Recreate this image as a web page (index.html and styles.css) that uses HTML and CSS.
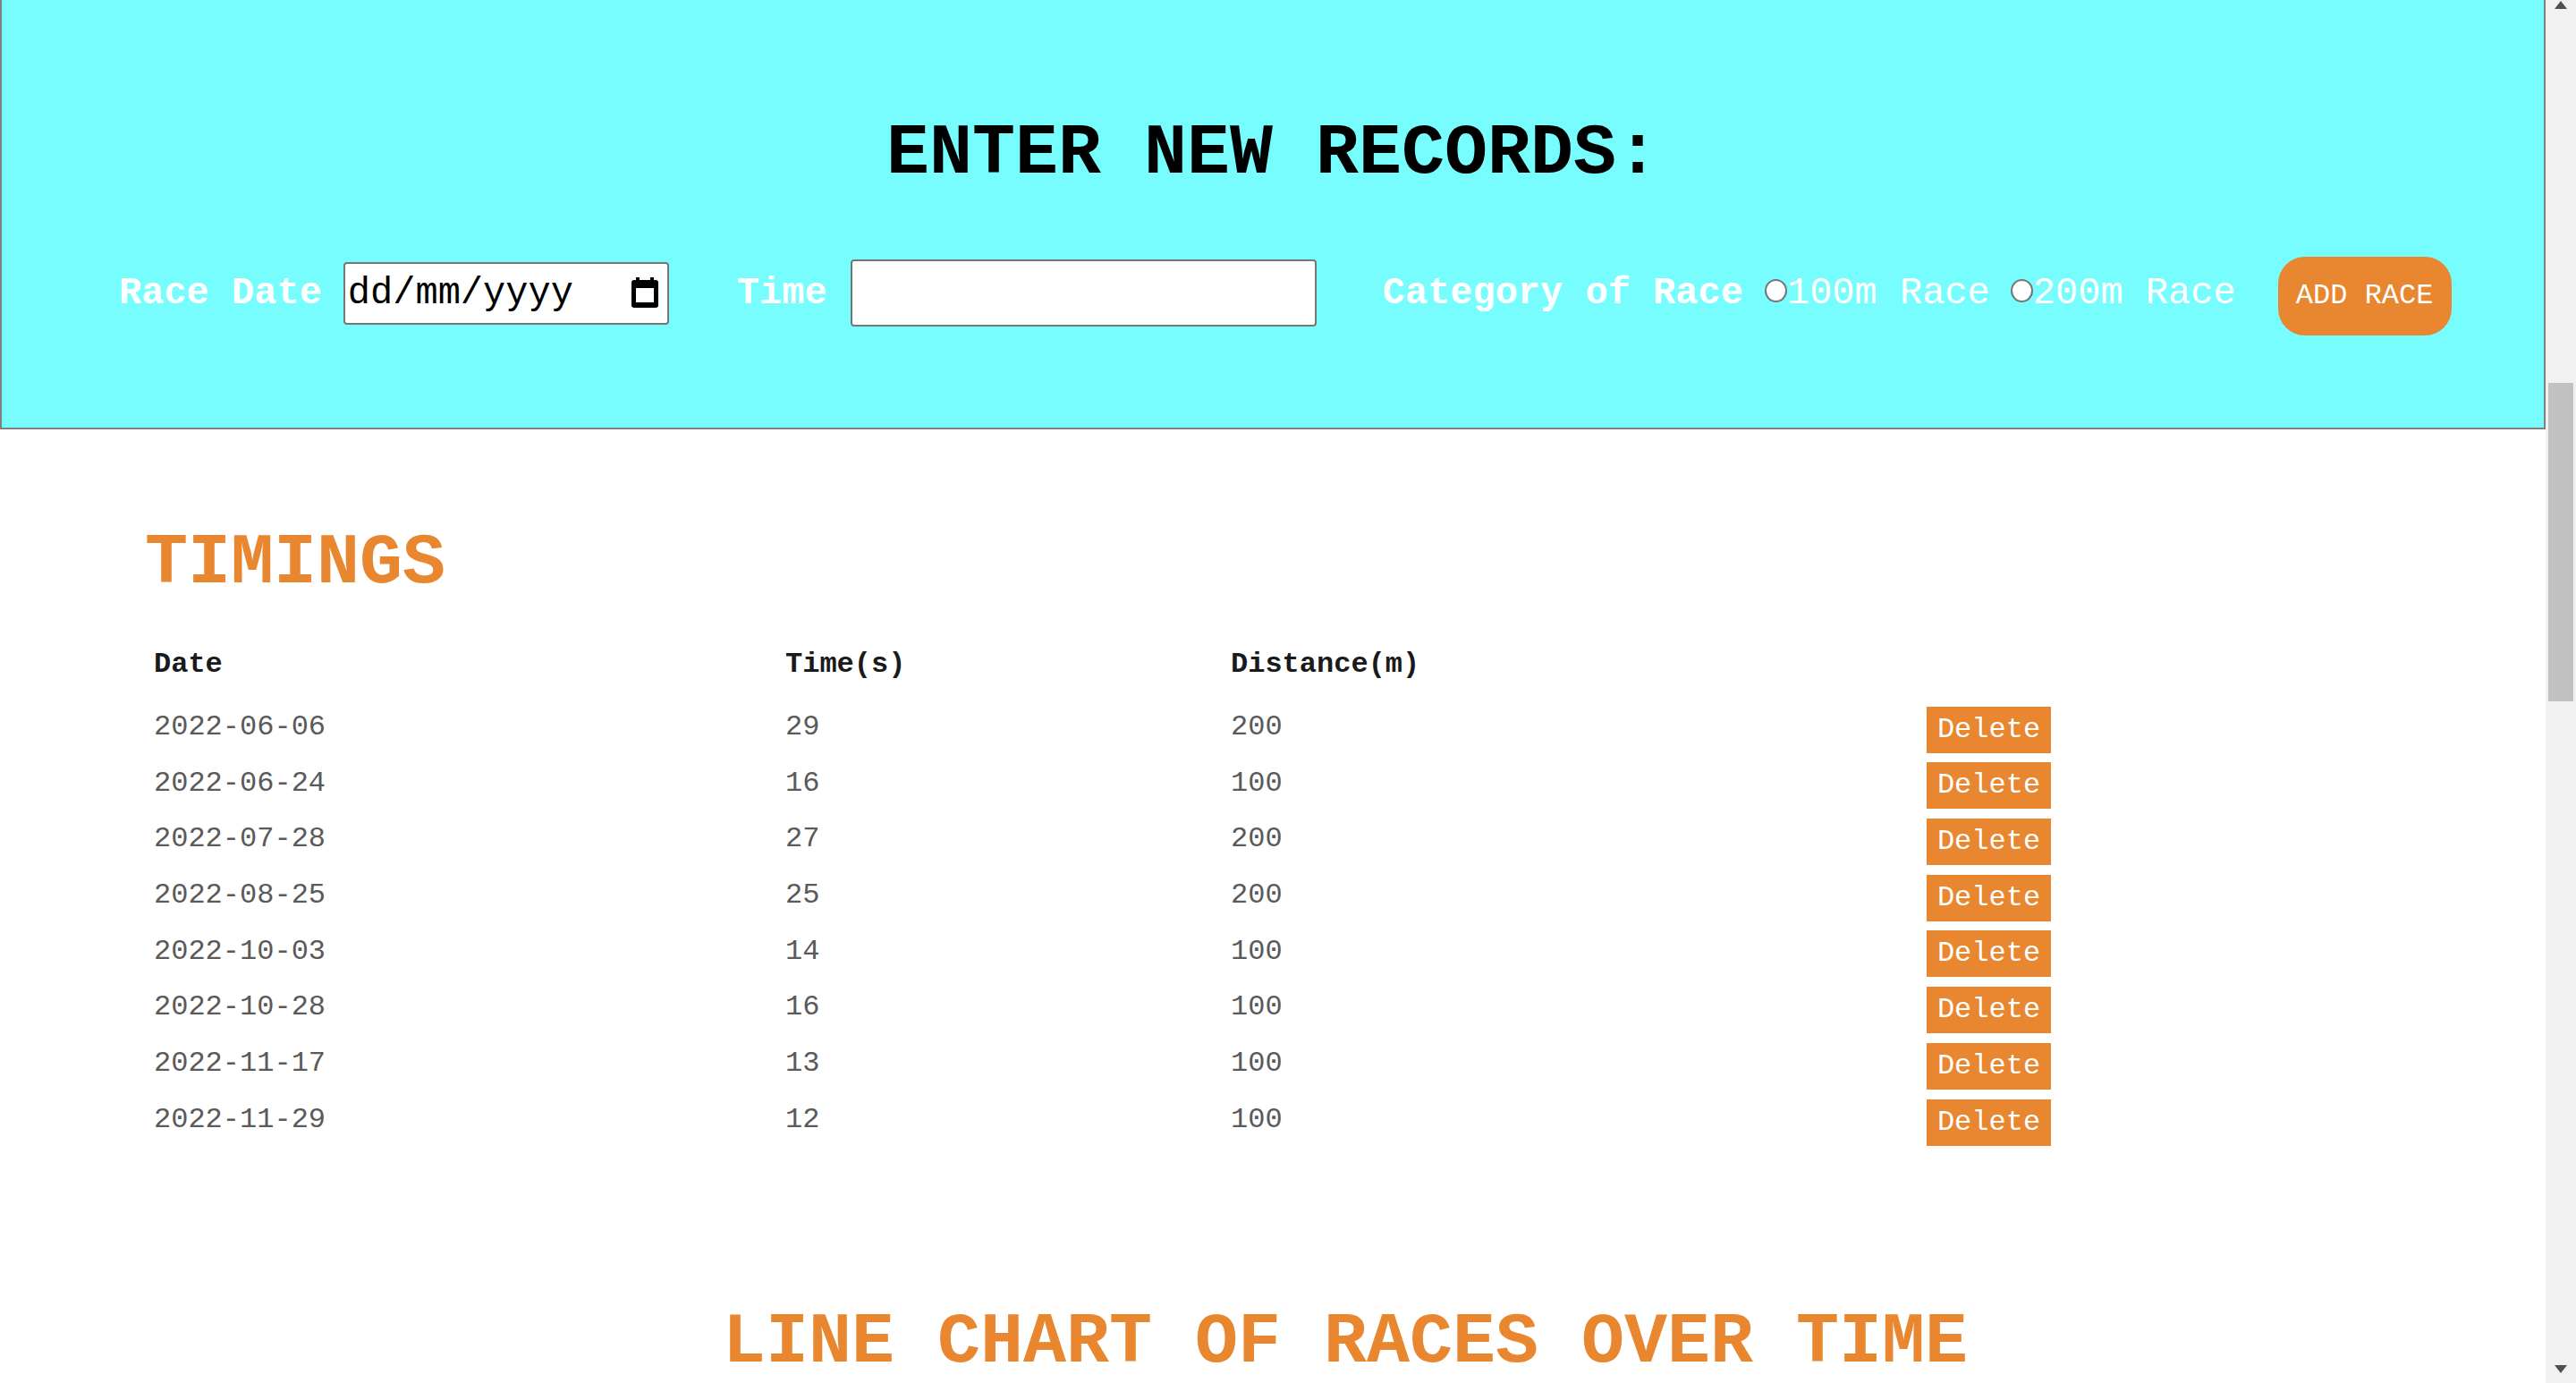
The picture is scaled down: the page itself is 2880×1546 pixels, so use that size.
FILE: index.html
```html
<!DOCTYPE html>
<html lang="en">
<head>
<meta charset="utf-8">
<title>Race Records</title>
<link rel="stylesheet" href="styles.css">
</head>
<body>
<div class="page">
  <main class="content">
    <header class="entry">
      <h1 class="entry-title">ENTER NEW RECORDS:</h1>
      <form class="entry-form">
        <label class="field-label lbl-date">Race Date</label>
        <div class="date-input">
          <span class="date-text">dd/mm/yyyy</span>
          <svg class="cal-icon" viewBox="0 0 32 35" width="32" height="35" aria-hidden="true">
            <rect x="6" y="0" width="4" height="6" fill="#000"/>
            <rect x="22" y="0" width="4" height="6" fill="#000"/>
            <rect x="1" y="3" width="30" height="31" rx="3" fill="#000"/>
            <rect x="6" y="12" width="20" height="16" fill="#fff"/>
          </svg>
        </div>
        <label class="field-label lbl-time">Time</label>
        <input class="time-input" type="text" aria-label="Time">
        <label class="field-label lbl-cat">Category of Race</label>
        <input class="radio" type="radio" name="cat" aria-label="100m Race">
        <span class="radio-text rt-first">100m Race</span>
        <input class="radio" type="radio" name="cat" aria-label="200m Race">
        <span class="radio-text rt-last">200m Race</span>
        <button class="add-btn" type="button">ADD RACE</button>
      </form>
    </header>

    <section class="timings">
      <h2 class="section-title">TIMINGS</h2>
      <div class="table">
        <div class="row row-head">
          <div class="cell th">Date</div>
          <div class="cell th">Time(s)</div>
          <div class="cell th">Distance(m)</div>
          <div class="cell th"></div>
        </div>
        <div class="row"><div class="cell td">2022-06-06</div><div class="cell td">29</div><div class="cell td">200</div><div class="cell"><button class="del-btn" type="button">Delete</button></div></div>
        <div class="row"><div class="cell td">2022-06-24</div><div class="cell td">16</div><div class="cell td">100</div><div class="cell"><button class="del-btn" type="button">Delete</button></div></div>
        <div class="row"><div class="cell td">2022-07-28</div><div class="cell td">27</div><div class="cell td">200</div><div class="cell"><button class="del-btn" type="button">Delete</button></div></div>
        <div class="row"><div class="cell td">2022-08-25</div><div class="cell td">25</div><div class="cell td">200</div><div class="cell"><button class="del-btn" type="button">Delete</button></div></div>
        <div class="row"><div class="cell td">2022-10-03</div><div class="cell td">14</div><div class="cell td">100</div><div class="cell"><button class="del-btn" type="button">Delete</button></div></div>
        <div class="row"><div class="cell td">2022-10-28</div><div class="cell td">16</div><div class="cell td">100</div><div class="cell"><button class="del-btn" type="button">Delete</button></div></div>
        <div class="row"><div class="cell td">2022-11-17</div><div class="cell td">13</div><div class="cell td">100</div><div class="cell"><button class="del-btn" type="button">Delete</button></div></div>
        <div class="row"><div class="cell td">2022-11-29</div><div class="cell td">12</div><div class="cell td">100</div><div class="cell"><button class="del-btn" type="button">Delete</button></div></div>
      </div>
      <h2 class="chart-title">LINE CHART OF RACES OVER TIME</h2>
    </section>
  </main>
  <div class="scrollbar" aria-hidden="true">
    <div class="sb-up"><span class="arrow-up"></span></div>
    <div class="sb-thumb"></div>
    <div class="sb-fill"></div>
    <div class="sb-down"><span class="arrow-down"></span></div>
  </div>
</div>
</body>
</html>
```

FILE: styles.css
```css
html, body {
  margin: 0;
  padding: 0;
  height: 1546px;
  overflow: hidden;
  background: #ffffff;
}

body {
  font-family: "Liberation Mono", "Courier New", monospace;
}

.page {
  display: flex;
  width: 2880px;
  height: 1546px;
}

.content {
  flex: 1;
  min-width: 0;
  display: flex;
  flex-direction: column;
}

/* ---------- entry header ---------- */
.entry {
  box-sizing: border-box;
  height: 480px;
  background: #77fdfe;
  border-left: 2px solid #808080;
  border-right: 2px solid #808080;
  border-bottom: 2px solid #808080;
  padding-top: 126px;
}

.entry-title {
  margin: 0;
  font-size: 80px;
  font-weight: bold;
  line-height: normal;
  text-align: center;
  color: #000;
}

.entry-form {
  display: flex;
  align-items: center;
  height: 90px;
  margin: 68px 0 0 0;
  padding-left: 131px;
}

.field-label {
  font-size: 42px;
  font-weight: bold;
  color: #ffffff;
  margin-bottom: 5px;
  white-space: pre;
}

.lbl-date { margin-right: 24px; }
.lbl-time { margin-right: 26px; }
.lbl-cat { margin-right: 24px; }

.date-input {
  box-sizing: border-box;
  width: 364px;
  height: 70px;
  margin-right: 76px;
  margin-bottom: 5px;
  background: #fff;
  border: 2px solid #767676;
  border-radius: 4px;
  display: flex;
  align-items: center;
  justify-content: space-between;
  padding: 0 9px 0 3px;
}

.date-text {
  font-size: 42px;
  color: #000;
  white-space: pre;
}

.cal-icon {
  display: block;
  width: 32px;
  height: 35px;
}

.time-input {
  box-sizing: border-box;
  width: 521px;
  height: 75px;
  margin: 0 74px 5px 0;
  background: #fff;
  border: 2px solid #767676;
  border-radius: 4px;
  padding: 0 4px;
  font-family: "Liberation Mono", monospace;
  font-size: 42px;
}

.radio {
  -webkit-appearance: none;
  appearance: none;
  box-sizing: border-box;
  width: 25px;
  height: 26px;
  margin: 0 0 10px 0;
  background: #fff;
  border: 2px solid #767676;
  border-radius: 50%;
}

.radio-text {
  font-size: 42px;
  color: #ffffff;
  margin-bottom: 5px;
  white-space: pre;
}

.rt-first { margin-right: 23px; }
.rt-last { margin-right: 47px; }

.add-btn {
  box-sizing: border-box;
  width: 194px;
  height: 88px;
  margin-top: 2px;
  padding: 0;
  border: none;
  border-radius: 30px;
  background: #e8872f;
  color: #ffffff;
  font-family: "Liberation Mono", monospace;
  font-size: 32px;
  line-height: 36px;
  white-space: pre;
}

/* ---------- timings ---------- */
.timings {
  padding: 104px 0 0 162px;
}

.section-title {
  margin: 0;
  font-size: 80px;
  font-weight: bold;
  line-height: normal;
  color: #e8872f;
}

.table {
  margin-top: 49px;
  display: flex;
  flex-direction: column;
}

.row {
  display: grid;
  grid-template-columns: 706px 498px 778px 1fr;
  align-items: start;
  height: 62.7px;
}

.row-head {
  height: 60.35px;
}

.cell {
  padding-left: 10px;
  font-size: 32px;
  line-height: normal;
  white-space: pre;
}

.th {
  font-weight: bold;
  color: #1a1a1a;
}

.td {
  padding-top: 9.7px;
  color: #5a5a5a;
}

.del-btn {
  display: block;
  box-sizing: border-box;
  width: 139px;
  height: 52px;
  margin-top: 5.35px;
  padding: 0;
  border: none;
  border-radius: 0;
  background: #e8872f;
  color: #ffffff;
  font-family: "Liberation Mono", monospace;
  font-size: 32px;
  line-height: 36px;
}

.chart-title {
  margin: 169px 0 0 0;
  font-size: 80px;
  font-weight: bold;
  line-height: normal;
  text-align: center;
  color: #e8872f;
  white-space: pre;
}

/* ---------- scrollbar ---------- */
.scrollbar {
  width: 34px;
  flex: 0 0 34px;
  background: #f1f1f1;
  display: flex;
  flex-direction: column;
  align-items: center;
}

.sb-up {
  height: 12px;
  display: flex;
  justify-content: center;
  align-items: flex-start;
  padding-top: 1px;
}

.arrow-up {
  width: 0;
  height: 0;
  border-left: 7px solid transparent;
  border-right: 7px solid transparent;
  border-bottom: 9px solid #505050;
}

.sb-thumb {
  margin-top: 415px;
  width: 28px;
  height: 356px;
  background: #c1c1c1;
}

.sb-fill {
  flex: 1;
}

.sb-down {
  height: 20px;
  display: flex;
  justify-content: center;
  align-items: flex-start;
}

.arrow-down {
  width: 0;
  height: 0;
  border-left: 7px solid transparent;
  border-right: 7px solid transparent;
  border-top: 9px solid #505050;
}
```
